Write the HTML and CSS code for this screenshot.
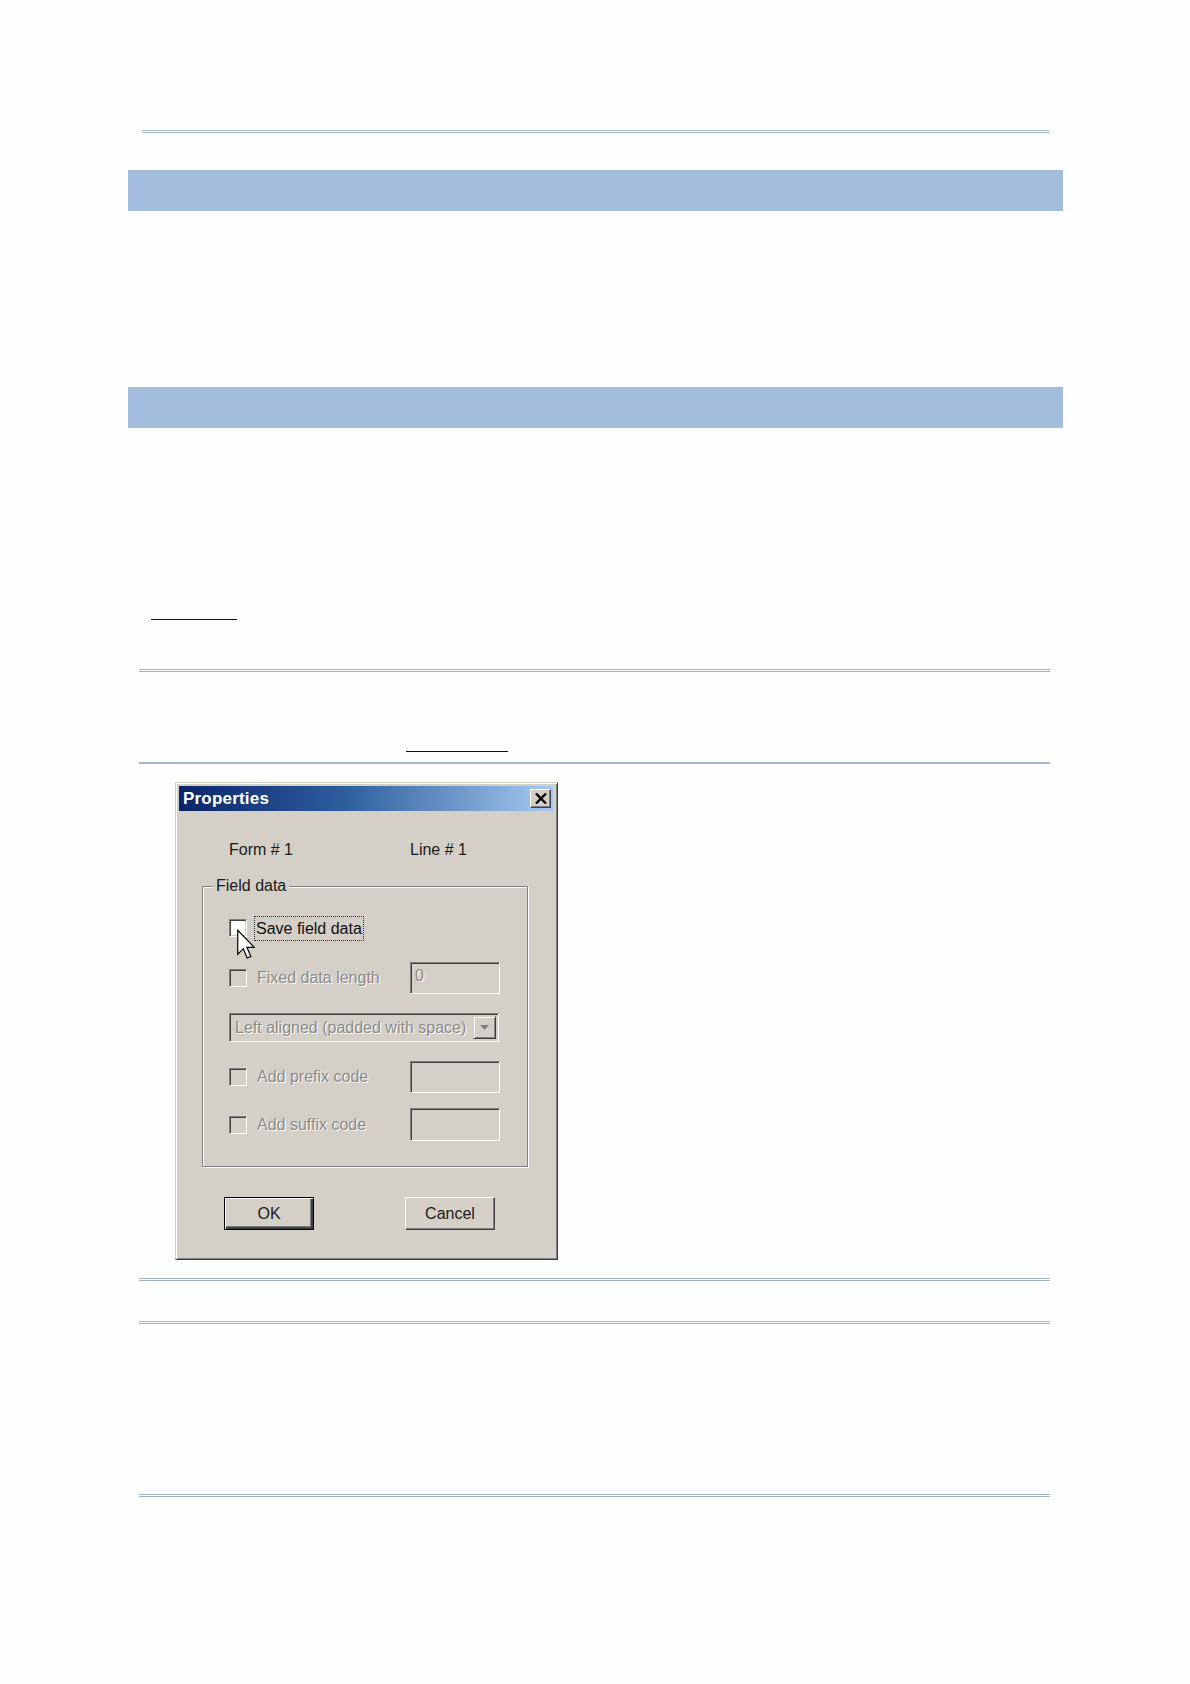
FILE: index.html
```html
<!DOCTYPE html>
<html>
<head>
<meta charset="utf-8">
<link rel="stylesheet" href="styles.css">
<title>Properties</title>
</head>
<body>
<div class="page">
  <div class="rule-double rule-top"></div>
  <div class="bar bar-1"></div>
  <div class="bar bar-2"></div>
  <div class="uline uline-1"></div>
  <div class="rule-double rule-a"></div>
  <div class="uline uline-2"></div>
  <div class="rule-thick"></div>

  <div class="dialog">
    <div class="titlebar">
      <span class="title">Properties</span>
      <span class="close-btn"><svg width="12" height="11" viewBox="0 0 12 11"><path d="M1 0.5 L11 10.5 M11 0.5 L1 10.5" stroke="#000" stroke-width="2.4"/></svg></span>
    </div>
    <div class="dlg-body">
      <div class="info">
        <span class="info-col">Form # 1</span>
        <span>Line # 1</span>
      </div>
      <div class="group">
        <span class="legend">Field data</span>
        <div class="row row-1">
          <span class="chk chk-on"></span>
          <span class="focus">Save field data</span>
          <svg class="cursor" width="18" height="31" viewBox="0 0 12 20"><path d="M0.5 0.5 L0.5 16.5 L4.2 12.8 L6.8 19 L9.2 18 L6.6 11.9 L11.5 11.9 Z" fill="#fff" stroke="#000" stroke-width="0.8" stroke-linejoin="miter"/></svg>
        </div>
        <div class="row row-2">
          <span class="chk"></span>
          <span class="lbl dis">Fixed data length</span>
          <span class="tbox"><span class="dis">0</span></span>
        </div>
        <div class="combo">
          <span class="combo-text dis">Left aligned (padded with space)</span>
          <span class="combo-btn"><svg width="9" height="5" viewBox="0 0 9 5"><path d="M0 0 L9 0 L4.5 5 Z" fill="#808080"/></svg></span>
        </div>
        <div class="row row-3">
          <span class="chk"></span>
          <span class="lbl dis">Add prefix code</span>
          <span class="tbox"></span>
        </div>
        <div class="row row-4">
          <span class="chk"></span>
          <span class="lbl dis">Add suffix code</span>
          <span class="tbox"></span>
        </div>
      </div>
      <div class="buttons">
        <span class="btn btn-default">OK</span>
        <span class="btn">Cancel</span>
      </div>
    </div>
  </div>

  <div class="rule-double rule-b"></div>
  <div class="rule-double rule-c"></div>
  <div class="rule-double rule-d"></div>
</div>
</body>
</html>
```
FILE: styles.css
```css
html, body {
  margin: 0;
  padding: 0;
  background: #fefefe;
}
.page {
  width: 1190px;
  height: 1684px;
  overflow: hidden;
  padding-top: 130px;
  box-sizing: border-box;
  font-family: "Liberation Sans", Arial, sans-serif;
}
.rule-double {
  height: 1px;
  border-top: 1px solid #9fb5c2;
  border-bottom: 1px solid #9fb5c2;
  margin-left: 139px;
  width: 911px;
}
.rule-top {
  margin-left: 142px;
  width: 907px;
}
.bar {
  margin-left: 128px;
  width: 935px;
  height: 41px;
  background: #a2bedc;
}
.bar-1 { margin-top: 37px; }
.bar-2 { margin-top: 176px; }
.uline {
  height: 0;
  border-top: 1px solid #111;
}
.uline-1 {
  margin-top: 191px;
  margin-left: 151px;
  width: 86px;
}
.rule-a { margin-top: 49px; }
.uline-2 {
  margin-top: 79px;
  margin-left: 406px;
  width: 102px;
}
.rule-thick {
  margin-top: 10px;
  margin-left: 139px;
  width: 911px;
  height: 2px;
  background: #a4b6d0;
}
.rule-b { margin-top: 18px; }
.rule-c { margin-top: 40px; }
.rule-d { margin-top: 170px; }

/* dialog */
.dialog {
  margin-top: 18px;
  margin-left: 175px;
  width: 383px;
  height: 478px;
  box-sizing: border-box;
  background: #d4d0c8;
  border: 1px solid;
  border-color: #d4d0c8 #404040 #404040 #d4d0c8;
  box-shadow: inset 1px 1px 0 #fff, inset -1px -1px 0 #808080;
  padding: 3px 4px 3px 3px;
  color: #1a1a1a;
  font-size: 16px;
}
.titlebar {
  height: 25px;
  display: flex;
  align-items: center;
  justify-content: space-between;
  padding: 0 2px 0 4px;
  background: linear-gradient(to right, #0a246a 0%, #2f5f9e 45%, #a6caf0 100%);
}
.title {
  color: #fff;
  font-weight: bold;
  font-size: 17px;
  letter-spacing: 0.2px;
}
.close-btn {
  width: 21px;
  height: 19px;
  box-sizing: border-box;
  background: #d4d0c8;
  border: 1px solid;
  border-color: #fff #404040 #404040 #fff;
  box-shadow: inset -1px -1px 0 #808080;
  display: flex;
  align-items: center;
  justify-content: center;
}
.dlg-body {
  position: relative;
}
.info {
  margin-top: 29px;
  padding-left: 50px;
  height: 20px;
  line-height: 20px;
  display: flex;
}
.info-col {
  width: 181px;
}
.group {
  position: relative;
  margin-top: 26px;
  margin-left: 23px;
  width: 326px;
  height: 281px;
  box-sizing: border-box;
  border: 1px solid #808080;
  box-shadow: inset 1px 1px 0 #fff, 1px 1px 0 #fff;
  padding: 0 27px 0 26px;
}
.legend {
  position: absolute;
  left: 10px;
  top: -11px;
  padding: 0 3px;
  background: #d4d0c8;
  line-height: 20px;
}
.row {
  display: flex;
  align-items: center;
  position: relative;
}
.row-1 { margin-top: 28px; height: 26px; }
.row-2 { margin-top: 21px; height: 32px; }
.row-3 { margin-top: 19px; height: 32px; }
.row-4 { margin-top: 15px; height: 33px; }
.chk {
  width: 18px;
  height: 18px;
  box-sizing: border-box;
  border: 1px solid;
  border-color: #808080 #fff #fff #808080;
  box-shadow: inset 1px 1px 0 #404040, inset -1px -1px 0 #d4d0c8;
  background: #d4d0c8;
  flex: none;
}
.chk-on {
  background: #fff;
}
.focus {
  margin-left: 7px;
  padding: 1px 1px;
  border: 1px dotted #333;
  line-height: 21px;
  color: #111;
}
.cursor {
  position: absolute;
  left: 8px;
  top: 14px;
}
.lbl {
  margin-left: 10px;
}
.dis {
  color: #8a8a8a;
  text-shadow: 1px 1px 0 #fff;
}
.tbox {
  margin-left: auto;
  width: 90px;
  height: 100%;
  box-sizing: border-box;
  border: 1px solid;
  border-color: #808080 #fff #fff #808080;
  box-shadow: inset 1px 1px 0 #404040, inset -1px -1px 0 #d4d0c8;
  background: #d4d0c8;
  padding: 3px 0 0 4px;
  line-height: 20px;
}
.combo {
  margin-top: 19px;
  width: 270px;
  height: 29px;
  box-sizing: border-box;
  border: 1px solid;
  border-color: #808080 #fff #fff #808080;
  box-shadow: inset 1px 1px 0 #404040, inset -1px -1px 0 #d4d0c8;
  background: #d4d0c8;
  display: flex;
  align-items: center;
  padding: 2px;
}
.combo-text {
  flex: 1;
  padding-left: 3px;
  white-space: nowrap;
  overflow: hidden;
}
.combo-btn {
  width: 23px;
  height: 23px;
  box-sizing: border-box;
  border: 1px solid;
  border-color: #d4d0c8 #404040 #404040 #d4d0c8;
  box-shadow: inset 1px 1px 0 #fff, inset -1px -1px 0 #808080;
  display: flex;
  align-items: center;
  justify-content: center;
}
.buttons {
  margin-top: 30px;
  padding-left: 45px;
  display: flex;
  gap: 91px;
}
.btn {
  width: 90px;
  height: 33px;
  box-sizing: border-box;
  border: 1px solid;
  border-color: #fff #404040 #404040 #fff;
  box-shadow: inset -1px -1px 0 #808080;
  display: flex;
  align-items: center;
  justify-content: center;
  color: #1a1a1a;
}
.btn-default {
  border: 1px solid #000;
  box-shadow: inset 1px 1px 0 #fff, inset -2px -2px 0 #404040, inset -3px -3px 0 #808080;
}
```
